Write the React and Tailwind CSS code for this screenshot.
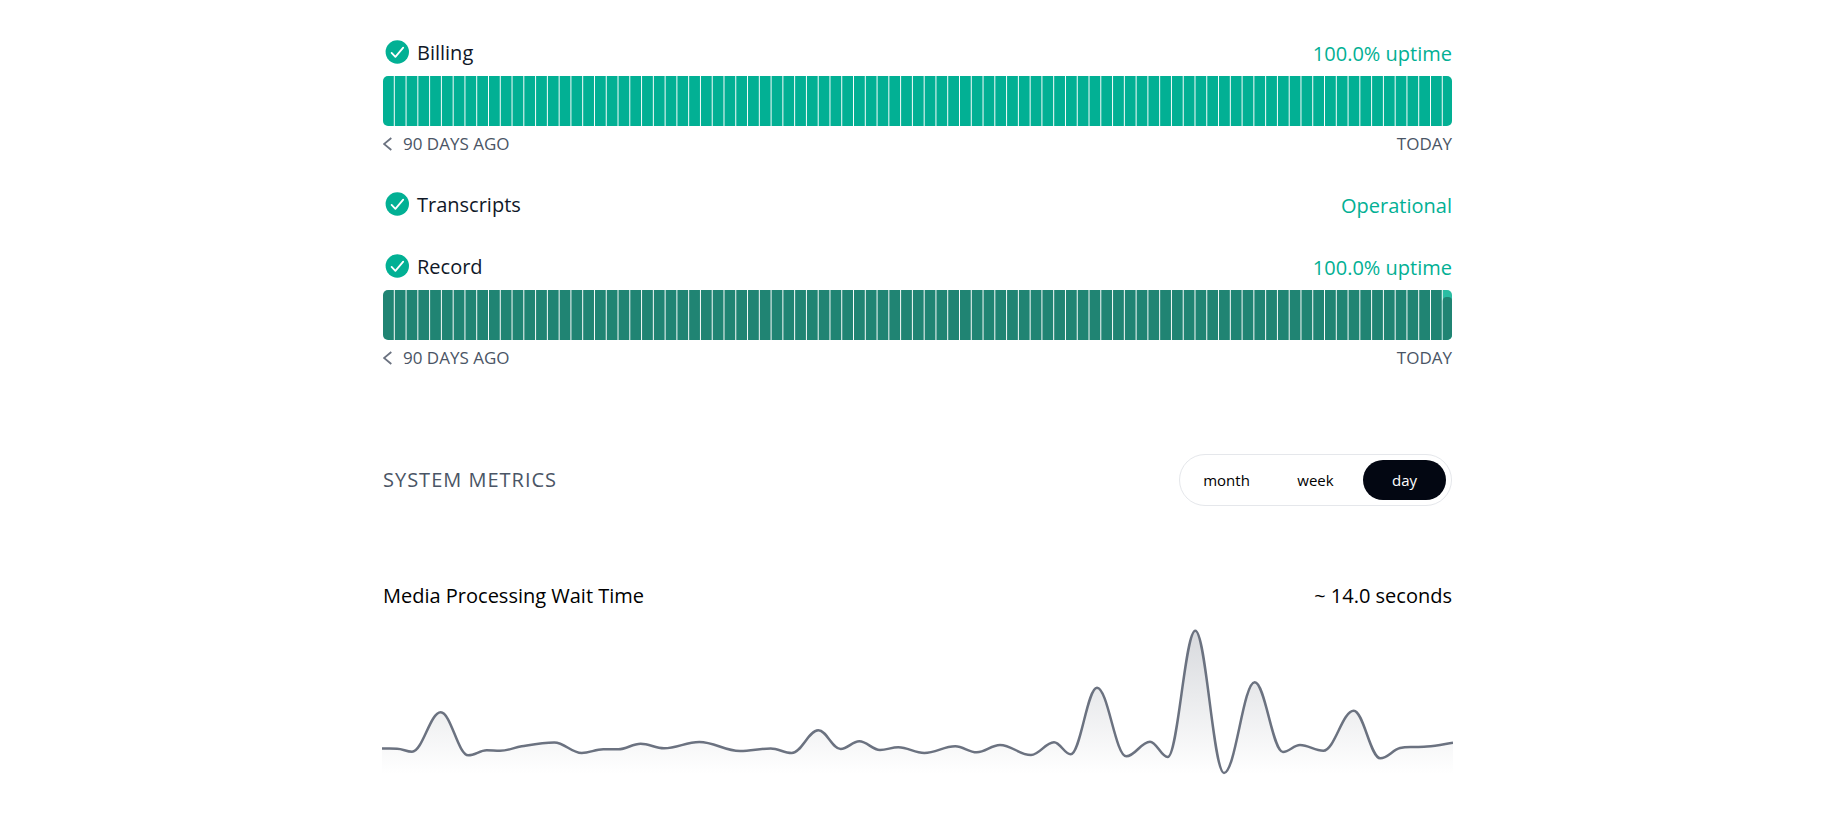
import React, { useState } from 'react';

const DAYS = 91;
const BAR_STEP = 11.775;
const BAR_WIDTH = 10.8;

const PERIODS = ['month', 'week', 'day'];

// [x, y, slope], slope is 0 where the curve turns
const WAIT_TIME = [
  [0, 120.5], [15, 120.7], [30, 123.7], [58.7, 84.3], [86.3, 127.3],
  [104.7, 122.3], [118, 122.7], [139.7, 118.3, -0.17], [172.3, 114.4],
  [199.7, 125], [221.3, 121.3], [236.3, 121.3], [258.7, 115.7],
  [282, 120.3], [317.3, 114], [358, 123], [388.7, 120.4], [409.7, 125],
  [436.3, 102.3], [458.7, 121], [477.3, 113.3], [498, 122],
  [516.3, 119.3], [542.3, 125], [573.3, 118.3], [594.7, 124.3],
  [618, 117], [649, 127], [672, 114.3], [688.7, 126.3], [715, 59.7],
  [744.3, 128.3], [768, 113.7], [785.7, 129], [813.3, 2.7], [842, 145],
  [872.7, 54.3], [901, 124], [918, 117], [941.3, 122.7], [971.7, 82.7],
  [998.3, 130.3], [1018, 120, -0.25], [1032, 119], [1045, 118.6, -0.04],
  [1071, 114.7, -0.17],
];

const curvePath = (points) => points.reduce((path, [x, y, slope = 0], i) => {
  if (i === 0) {
    return `M${x} ${y}`;
  }
  const [px, py, pslope = 0] = points[i - 1];
  const dx = (x - px) * 0.37;
  return `${path}C${px + dx} ${py + dx * pslope} ${x - dx} ${y - dx * slope} ${x} ${y}`;
}, '');

function CheckIcon() {
  return (
    <svg className="h-7 w-7 flex-none" viewBox="0 0 28 28" fill="none" aria-hidden="true">
      <circle cx="14.3" cy="14" r="11.7" fill="#02b094" />
      <path
        d="M8.6 14.9l3.8 4 7.8-9.3"
        stroke="#fff"
        strokeWidth="1.8"
        strokeLinecap="round"
        strokeLinejoin="round"
      />
    </svg>
  );
}

function ServiceHeader({ name, status }) {
  return (
    <div className="flex h-7 items-end justify-between">
      <div className="flex items-end gap-1.5">
        <CheckIcon />
        <h3 className="text-[20px] leading-[26px] text-gray-900">{name}</h3>
      </div>
      <p className="text-[20px] leading-6 text-[#02b094]">{status}</p>
    </div>
  );
}

function UptimeBars({ id, color, partial }) {
  return (
    <svg
      className="mt-[10px] block h-[50px] w-full"
      viewBox="0 0 1069 50"
      preserveAspectRatio="none"
      role="img"
      aria-label="Daily uptime"
    >
      <clipPath id={id}>
        <rect width="1069" height="50" rx="5" />
      </clipPath>
      <g clipPath={`url(#${id})`}>
        {Array.from({ length: DAYS }, (_, i) => (
          <rect
            key={i}
            x={i * BAR_STEP}
            width={BAR_WIDTH}
            height="50"
            fill={partial && i === DAYS - 1 ? '#2bbda3' : color}
          />
        ))}
        {partial && (
          <rect x={(DAYS - 1) * BAR_STEP} y="7" width="9.3" height="48" rx="4" fill={color} />
        )}
      </g>
    </svg>
  );
}

function Service({ id, name, status, color, partial }) {
  return (
    <section>
      <ServiceHeader name={name} status={status} />
      {color && (
        <>
          <UptimeBars id={id} color={color} partial={partial} />
          <div className="mt-1.5 flex justify-between text-[17px] leading-6 text-gray-600">
            <div className="flex items-center gap-[11px]">
              <svg className="h-3.5 w-[9px]" viewBox="0 0 9 14" fill="none" aria-hidden="true">
                <path d="M8.3 1L1 7l7.3 6" stroke="#6b7280" strokeWidth="1.8" />
              </svg>
              <span>90 DAYS AGO</span>
            </div>
            <span>TODAY</span>
          </div>
        </>
      )}
    </section>
  );
}

function PeriodSwitch({ period, setPeriod }) {
  return (
    <div className="flex gap-1.5 rounded-full border border-gray-200 p-[5px]">
      {PERIODS.map((item) => (
        <button
          key={item}
          type="button"
          aria-pressed={item === period}
          onClick={() => setPeriod(item)}
          className={`h-10 w-[83px] rounded-full text-[15px] ${item === period ? 'bg-gray-950 text-white' : 'text-black'}`}
        >
          {item}
        </button>
      ))}
    </div>
  );
}

function WaitTimeChart() {
  const line = curvePath(WAIT_TIME);

  return (
    <div className="-mx-px mt-[18px]">
      <svg
        className="block h-[148px] w-full"
        viewBox="0 0 1071 148"
        preserveAspectRatio="none"
        role="img"
        aria-label="Media Processing Wait Time"
      >
        <defs>
          <linearGradient id="wait-fill" gradientUnits="userSpaceOnUse" x1="0" y1="0" x2="0" y2="146">
            <stop offset="0" stopColor="#6b7280" stopOpacity="0.27" />
            <stop offset="1" stopColor="#6b7280" stopOpacity="0" />
          </linearGradient>
        </defs>
        <path d={`${line}V146H0Z`} fill="url(#wait-fill)" />
        <path d={line} fill="none" stroke="#6b7280" strokeWidth="2.5" />
      </svg>
    </div>
  );
}

export default function App() {
  const [period, setPeriod] = useState('day');

  return (
    <div className="bg-white pl-[14px] font-['Open_Sans',sans-serif]">
      <main className="mx-auto max-w-[1069px] pt-[38px] pb-10">
        <div className="flex flex-col gap-[34px]">
          <Service id="billing" name="Billing" status="100.0% uptime" color="#02b094" />
          <Service id="transcripts" name="Transcripts" status="Operational" />
          <Service id="record" name="Record" status="100.0% uptime" color="#208473" partial />
        </div>

        <div className="mt-[84px] flex items-center justify-between">
          <h2 className="text-[20px] leading-7 tracking-wider text-gray-600">SYSTEM METRICS</h2>
          <PeriodSwitch period={period} setPeriod={setPeriod} />
        </div>

        <section className="mt-[76px]">
          <div className="flex justify-between text-[20px] leading-7 text-black">
            <h3>Media Processing Wait Time</h3>
            <p>~ 14.0 seconds</p>
          </div>
          <WaitTimeChart />
        </section>
      </main>
    </div>
  );
}
